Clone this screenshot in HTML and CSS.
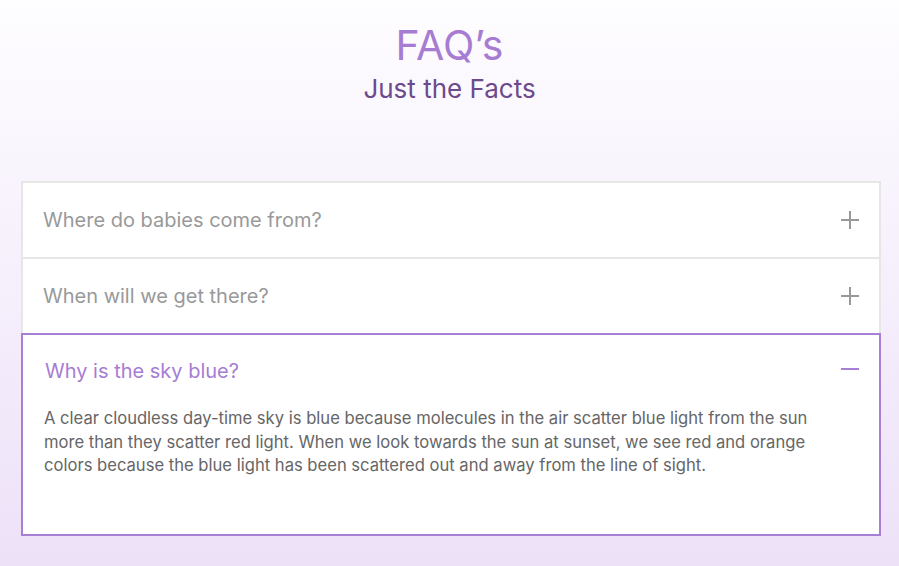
FILE: index.html
```html
<!DOCTYPE html>
<html lang="en">
<head>
    <meta charset="UTF-8">
    <meta name="viewport" content="width=device-width, initial-scale=1.0">
    <title>FAQ's</title>
    <link rel="stylesheet" href="styles.css">
</head>
<body>
    <header class="heading">
        <h1>FAQ’s</h1>
        <h2>Just the Facts</h2>
    </header>

    <div class="faq">
        <div class="faq-item">
            <div class="faq-question">
                <span>Where do babies come from?</span>
                <span class="icon plus"></span>
            </div>
        </div>
        <div class="faq-item">
            <div class="faq-question">
                <span>When will we get there?</span>
                <span class="icon plus"></span>
            </div>
        </div>
        <div class="faq-item open">
            <div class="faq-question">
                <span>Why is the sky blue?</span>
                <span class="icon minus"></span>
            </div>
            <p class="faq-answer">A clear cloudless day-time sky is blue because molecules in the air scatter blue light from the sun more than they scatter red light. When we look towards the sun at sunset, we see red and orange colors because the blue light has been scattered out and away from the line of sight.</p>
        </div>
    </div>
</body>
</html>
```

FILE: styles.css
```css
html {
    min-height: 100%;
    background: linear-gradient(#fefdff, #ede1f8);
}
body {
    font-family: Inter, "Open Sans", sans-serif;
    margin: 0;
    padding: 0;
}
.heading {
    text-align: center;
    padding-top: 22px;
}
.heading h1 {
    margin: 0;
    font-size: 41px;
    font-weight: normal;
    line-height: 46px;
    color: #a67dd2;
}
.heading h2 {
    margin: 0;
    font-size: 26px;
    font-weight: normal;
    line-height: 42px;
    color: #6d4a8c;
}
.faq {
    width: 860px;
    margin: 71px 0 0 21px;
}
.faq-item {
    background: #fff;
    border: 2px solid #e6e6e6;
    border-top-width: 0;
}
.faq-item:first-child {
    border-top-width: 2px;
}
.faq-question {
    display: flex;
    justify-content: space-between;
    align-items: center;
    height: 74px;
    padding: 0 20px;
    font-size: 20px;
    color: #999;
}
.faq-item.open {
    margin-top: -2px;
    border: 2px solid #a77fd4;
    padding-bottom: 56px;
}
.faq-item.open .faq-question {
    color: #a67dd2;
    height: 68px;
    padding-top: 2px;
    padding-left: 22px;
}
.faq-answer {
    margin: 2px 0 0;
    padding: 0 50px 0 21px;
    font-size: 16.6px;
    line-height: 23.5px;
    color: #666;
}
.icon {
    position: relative;
    width: 18px;
    height: 18px;
}
.icon::before,
.icon::after {
    content: "";
    position: absolute;
    background: #999;
}
.icon::before {
    left: 0;
    right: 0;
    top: 8px;
    height: 2px;
}
.plus::after {
    top: 0;
    bottom: 0;
    left: 8px;
    width: 2px;
}
.minus {
    margin-top: -4px;
}
.minus::before {
    background: #a77fd4;
}
```
